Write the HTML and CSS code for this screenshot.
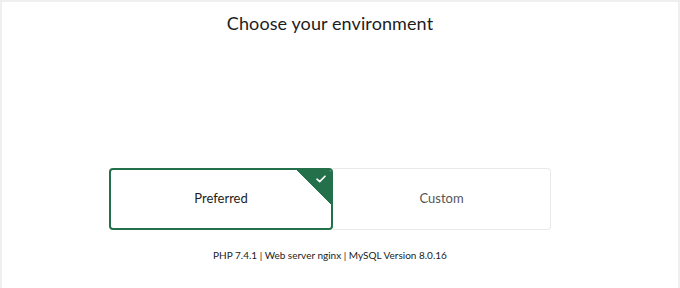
FILE: index.html
```html
<!DOCTYPE html>
<html>
<head>
<meta charset="utf-8">
<link rel="stylesheet" href="styles.css">
</head>
<body>
<div class="frame">
  <div class="content">
    <h1 class="title">Choose your environment</h1>
    <div class="options">
      <div class="option selected">
        <span class="label">Preferred</span>
        <span class="corner">
          <svg class="check" width="10" height="8" viewBox="0 0 10 8"><path d="M1 4.2 L3.7 6.6 L9 1.2" fill="none" stroke="#fff" stroke-width="1.6" stroke-linecap="round" stroke-linejoin="round"/></svg>
        </span>
      </div>
      <div class="option">
        <span class="label">Custom</span>
      </div>
    </div>
    <p class="meta">PHP 7.4.1 | Web server nginx | MySQL Version 8.0.16</p>
  </div>
</div>
</body>
</html>
```
FILE: styles.css
```css
html, body {
  margin: 0;
  padding: 0;
  background: #fff;
}
.frame {
  box-sizing: border-box;
  width: 680px;
  height: 288px;
  border: 2px solid #efefef;
  border-bottom: none;
  font-family: Lato, "Open Sans", sans-serif;
  color: #1d1d1d;
}
.content {
  display: flex;
  flex-direction: column;
  align-items: center;
  padding-right: 20px;
}
.title {
  margin: 9px 0 0;
  font-size: 18px;
  font-weight: 400;
  line-height: 24px;
  letter-spacing: 0.1px;
}
.options {
  display: flex;
  margin-top: 133px;
  width: 442px;
}
.option {
  position: relative;
  box-sizing: border-box;
  height: 62px;
  display: flex;
  align-items: center;
  justify-content: center;
  border-radius: 4px;
  font-size: 13px;
  color: #555;
  overflow: hidden;
}
.option.selected {
  width: 224px;
  border: 2px solid #24704a;
  color: #1d1d1d;
  padding-bottom: 2px;
}
.option:not(.selected) {
  flex: 1;
  border: 1px solid #e9e9e9;
  border-left: none;
  border-radius: 0 4px 4px 0;
  padding-bottom: 2px;
}
.corner {
  position: absolute;
  top: -2px;
  right: -2px;
  width: 38px;
  height: 38px;
  background: linear-gradient(to bottom left, #24704a 50%, transparent 50.5%);
}
.check {
  position: absolute;
  top: 7px;
  right: 7px;
}
.meta {
  margin: 17px 0 0;
  font-size: 10px;
  line-height: 16px;
  color: #222;
}
```
